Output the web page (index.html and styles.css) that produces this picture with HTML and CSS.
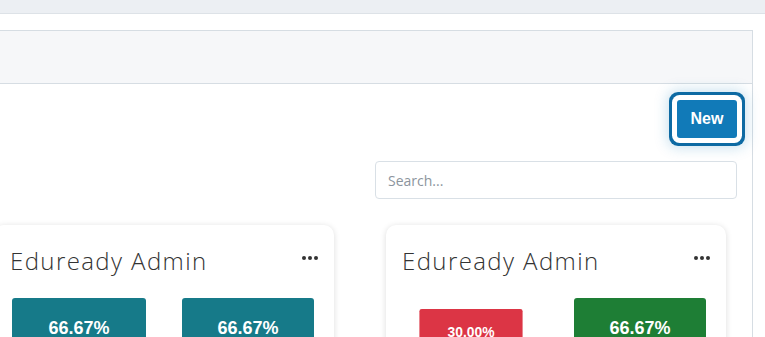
FILE: index.html
```
<!doctype html>
<html>
<head>
  <link rel="stylesheet" href="styles.css">
</head>
<body>
  <div class="topbar"></div>

  <div class="page">
    <div class="panel">
      <div class="panel-head"></div>
      <div class="panel-body">
        <div class="toolbar">
          <button class="btn-new">New</button>
        </div>
        <div class="search-row">
          <input class="search" type="text" placeholder="Search...">
        </div>

        <div class="cards">
          <div class="card">
            <div class="card-top">
              <h3 class="card-title">Eduready Admin</h3>
              <span class="dots"><svg width="16" height="4" viewBox="0 0 16 4"><circle cx="2" cy="2" r="2"/><circle cx="8" cy="2" r="2"/><circle cx="14" cy="2" r="2"/></svg></span>
            </div>
            <div class="stats">
              <div class="stat teal"><div class="pct">66.67%</div></div>
              <div class="stat teal"><div class="pct">66.67%</div></div>
            </div>
          </div>

          <div class="card">
            <div class="card-top">
              <h3 class="card-title">Eduready Admin</h3>
              <span class="dots"><svg width="16" height="4" viewBox="0 0 16 4"><circle cx="2" cy="2" r="2"/><circle cx="8" cy="2" r="2"/><circle cx="14" cy="2" r="2"/></svg></span>
            </div>
            <div class="stats">
              <div class="stat red small"><div class="pct">30.00%</div></div>
              <div class="stat green"><div class="pct">66.67%</div></div>
            </div>
          </div>
        </div>
      </div>
    </div>
  </div>
</body>
</html>
```

FILE: styles.css
```
body{
  margin: 0;
  background: #fff;
  overflow: hidden;
  font-family: "Open Sans", "Liberation Sans", sans-serif;
  color: #333;
}
.topbar{
  height: 13px;
  background: #eceff3;
  border-bottom: 1px solid #dde2e7;
}
.page{
  padding-top: 16px;
  margin-left: -25px;
  margin-right: 12px;
}
.panel{
  border: 1px solid #d6dde3;
  border-bottom: none;
}
.panel-head{
  height: 52px;
  background: #f6f7f9;
  border-bottom: 1px solid #d6dde3;
}
.panel-body{
  padding: 16px 15px 0 18px;
}
.toolbar{
  display: flex;
  justify-content: flex-end;
}
.btn-new{
  width: 60px;
  height: 38px;
  border: none;
  border-radius: 3px;
  background: #117ab8;
  color: #fff;
  font-family: "Liberation Sans", Arial, sans-serif;
  font-weight: bold;
  font-size: 16px;
  box-shadow: 0 0 0 5px #fff, 0 0 0 8px #0d6aa3, 0 0 14px 9px rgba(17,122,184,.25);
  cursor: pointer;
}
.search-row{
  display: flex;
  justify-content: flex-end;
  margin-top: 23px;
}
.search{
  width: 362px;
  height: 38px;
  box-sizing: border-box;
  border: 1px solid #d9e0e6;
  border-radius: 4px;
  padding: 0 12px;
  font-family: "Open Sans", sans-serif;
  font-size: 14px;
  outline: none;
}
.search::placeholder{
  color: #8c959d;
}
.cards{
  display: grid;
  grid-template-columns: 340px 340px;
  column-gap: 52px;
  margin-top: 26px;
}
.card{
  background: #fff;
  border-radius: 10px;
  box-shadow: 0 1px 6px rgba(0,0,0,.14);
  height: 200px;
}
.card-top{
  display: flex;
  justify-content: space-between;
  align-items: flex-start;
  padding: 18px 16px 0 16px;
}
.card-title{
  margin: 0;
  font-size: 24px;
  font-weight: 300;
  letter-spacing: 1.4px;
  line-height: 36px;
  color: #333;
}
.dots{
  margin-top: 13px;
}
.dots svg{
  display: block;
  fill: #333;
}
.stats{
  display: grid;
  grid-template-columns: 134px 132px;
  justify-content: space-between;
  padding: 0 20px 0 18px;
  margin-top: 19px;
}
.stat{
  height: 96px;
  border-radius: 3px;
  color: #fff;
  text-align: center;
  padding-top: 20px;
  box-sizing: border-box;
}
.pct{
  font-family: "Liberation Sans", Arial, sans-serif;
  font-weight: bold;
  font-size: 18px;
}
.teal{ background: #167a89; }
.red{ background: #dc3545; }
.green{ background: #1e7e35; }
.small{
  transform: scale(0.77);
}
```
